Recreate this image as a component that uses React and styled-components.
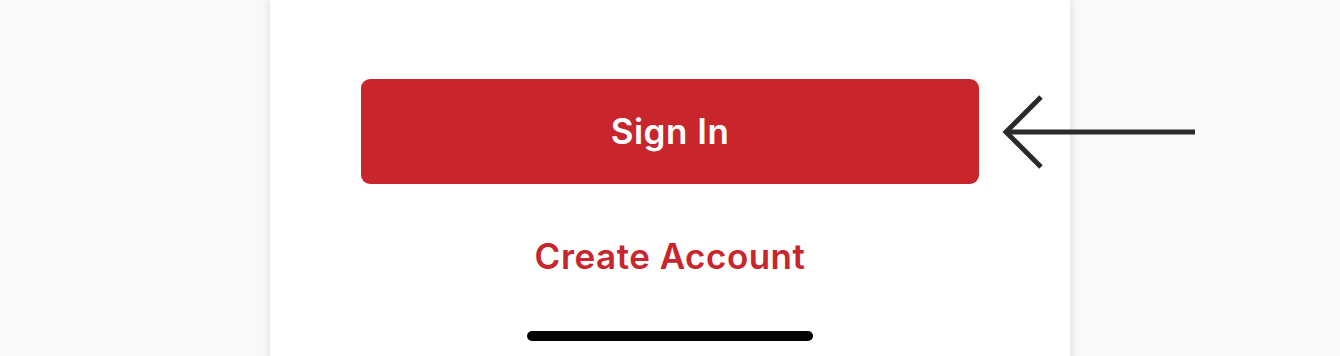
import React from "react";
import styled, { createGlobalStyle } from "styled-components";

const Global = createGlobalStyle`
  html, body { margin: 0; padding: 0; }
  body {
    background: #f9f9f9;
    font-family: Inter, "Noto Sans", "Liberation Sans", sans-serif;
    -webkit-font-smoothing: antialiased;
  }
`;

const Page = styled.div`
  position: relative;
  width: 1340px;
  height: 356px;
  overflow: hidden;
  display: flex;
  padding-left: 270px;
  box-sizing: border-box;
`;

const Phone = styled.div`
  width: 800px;
  height: 400px;
  background: #ffffff;
  box-shadow: 0 0 9px rgba(0, 0, 0, 0.14);
  display: flex;
  flex-direction: column;
  align-items: center;
  padding-top: 79px;
  box-sizing: border-box;
`;

const PrimaryButton = styled.button`
  width: 618px;
  height: 105px;
  border: none;
  border-radius: 9px;
  background: #c8252d;
  color: #ffffff;
  font-family: inherit;
  font-size: 35px;
  font-weight: 600;
  letter-spacing: 0.5px;
  display: flex;
  align-items: center;
  justify-content: center;
  padding: 0 0 2px;
  cursor: pointer;
`;

const LinkButton = styled.button`
  margin-top: 52px;
  border: none;
  background: none;
  color: #c8252d;
  font-family: inherit;
  font-size: 35px;
  font-weight: 600;
  letter-spacing: 0.5px;
  line-height: 40px;
  padding: 0;
  cursor: pointer;
`;

const HomeIndicator = styled.div`
  margin-top: 55px;
  width: 286px;
  height: 10px;
  border-radius: 5px;
  background: #000000;
`;

const Pointer = styled.svg`
  position: absolute;
  left: 998px;
  top: 92px;
`;

export default function App() {
  return (
    <>
      <Global />
      <Page>
        <Phone>
          <PrimaryButton>Sign In</PrimaryButton>
          <LinkButton>Create Account</LinkButton>
          <HomeIndicator />
        </Phone>
        <Pointer width="200" height="80" viewBox="0 0 200 80">
          <g stroke="#2b2b2b" strokeWidth="5" fill="none">
            <line x1="7" y1="40" x2="197" y2="40" />
            <polyline points="43,5 8,40 43,75" />
          </g>
        </Pointer>
      </Page>
    </>
  );
}
